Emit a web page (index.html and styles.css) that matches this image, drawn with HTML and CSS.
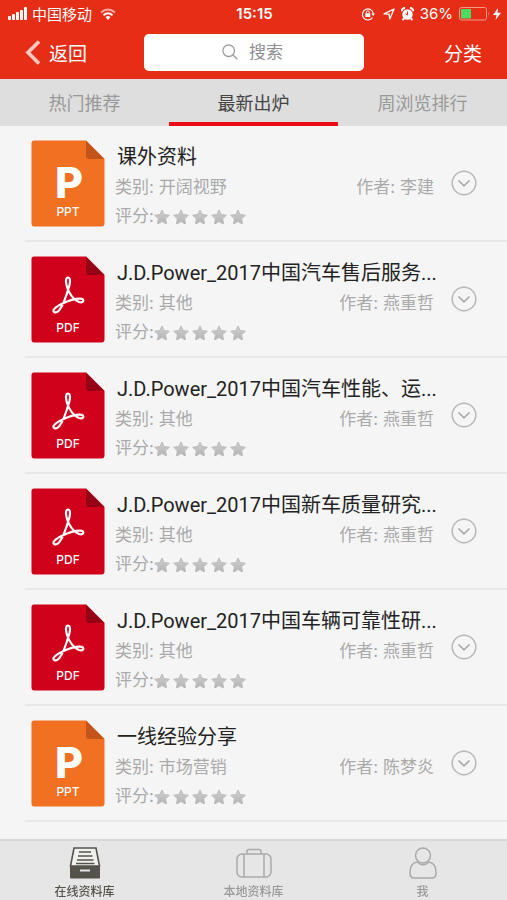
FILE: index.html
```html
<!DOCTYPE html>
<html lang="zh-CN">
<head>
    <meta charset="UTF-8">
    <meta name="viewport" content="width=device-width, initial-scale=1.0">
    <title>在线资料库</title>
    <link rel="stylesheet" href="styles.css">
</head>
<body>
    <!-- Shared icons -->
    <svg class="icon-defs" aria-hidden="true">
        <defs>
            <linearGradient id="star-fill" x1="0" y1="0" x2="0" y2="1">
                <stop offset="0" stop-color="#cfcfcf"/>
                <stop offset="1" stop-color="#b4b4b4"/>
            </linearGradient>
        </defs>
        <symbol id="ppt" viewBox="0 0 74 87">
            <path d="M3 0.500H55L73.500 19V83.500Q73.500 86.500 70.500 86.500H3Q0.500 86.500 0.500 83.500V3Q0.500 0.500 3 0.500Z" fill="#f27021"/>
            <path d="M55 0.500L73.500 19H58Q55 19 55 16Z" fill="#c4551a"/>
        </symbol>
        <symbol id="pdf" viewBox="0 0 74 87">
            <path d="M3 0.500H55L73.500 19V83.500Q73.500 86.500 70.500 86.500H3Q0.500 86.500 0.500 83.500V3Q0.500 0.500 3 0.500Z" fill="#d0021b"/>
            <path d="M55 0.500L73.500 19H58Q55 19 55 16Z" fill="#960014"/>
            <path d="M37 21.500C34.500 21.500 34.500 26 36 31C38 38 43 44 48 46C52 47 53 45 52 43.500C50 41.500 42 43 36 45.500C30 48 24 51 22.500 54C22 56.500 25 57.500 28 54.500C32 50 36 38 38.500 29C39.500 24 39 21.500 37 21.500Z" fill="none" stroke="#fff" stroke-width="2.200" stroke-linejoin="round"/>
        </symbol>
        <symbol id="star" viewBox="0 0 16 16">
            <path d="M8 1L10.200 5.500L15.300 6.200L11.700 9.800L12.500 15L8 12.600L3.500 15L4.300 9.800L0.700 6.200L5.800 5.500Z" fill="url(#star-fill)" stroke="#bdbdbd" stroke-width="1" stroke-linejoin="round"/>
        </symbol>
        <symbol id="expand" viewBox="0 0 26 26">
            <circle cx="13" cy="13" r="11.800" fill="none" stroke="#b8b8b8" stroke-width="1.500"/>
            <path d="M7.500 10.500L13 15.800L18.500 10.500" fill="none" stroke="#aaa" stroke-width="1.700"/>
        </symbol>
    </svg>

    <header class="header">
        <div class="status-bar">
            <div class="status-left">
                <svg width="20" height="13" viewBox="0 0 20 13" fill="#fff">
                    <rect x="0" y="9" width="3" height="4" rx="1"/>
                    <rect x="4" y="7" width="3" height="6" rx="1"/>
                    <rect x="8" y="5" width="3" height="8" rx="1"/>
                    <rect x="12" y="3" width="3" height="10" rx="1"/>
                    <rect x="16" y="0" width="3" height="13" rx="1"/>
                </svg>
                <span>中国移动</span>
                <svg class="wifi" width="16" height="12" viewBox="0 0 16 12" fill="none" stroke="#fff" stroke-width="2">
                    <path d="M1 4.500Q8 -1.500 15 4.500" opacity="0.600"/>
                    <path d="M3.500 7.200Q8 3.200 12.500 7.200"/>
                    <path d="M8 12L5.500 9Q8 7 10.500 9Z" fill="#fff" stroke="none"/>
                </svg>
            </div>
            <span class="time">15:15</span>
            <div class="status-right">
                <svg width="14" height="14" viewBox="0 0 14 14" fill="none" stroke="#fff">
                    <path d="M11.500 10.500A5.500 5.500 0 1 1 12.300 6.500" stroke-width="1.200"/>
                    <path d="M10.300 6.500H14L12.200 9Z" fill="#fff" stroke="none"/>
                    <rect x="4.300" y="6.300" width="5" height="3.700" fill="#fff" stroke="none"/>
                    <path d="M5.300 6.500V5.300Q5.300 4 6.800 4T8.300 5.300V6.500"/>
                </svg>
                <svg width="12" height="12" viewBox="0 0 12 12" fill="none" stroke="#fff" stroke-width="1.300" stroke-linejoin="round">
                    <path d="M1 5.800L11 1L6.800 11L6 6.200Z"/>
                </svg>
                <svg width="13" height="14" viewBox="0 0 13 14">
                    <circle cx="6.500" cy="7.500" r="5.200" fill="#fff"/>
                    <path d="M0.800 4.200A3 3 0 0 1 4 1M9 1A3 3 0 0 1 12.200 4.200M3 11.500L1.500 13M10 11.500L11.500 13" stroke="#fff" stroke-width="2" fill="none"/>
                    <path d="M6.500 4.500V8L4.500 6.800" stroke="#e62e17" fill="none"/>
                </svg>
                <span>36%</span>
                <svg width="32" height="14" viewBox="0 0 32 14">
                    <rect x="0.500" y="0.500" width="27" height="12.500" rx="2" fill="none" stroke="#f29a8c"/>
                    <rect x="2" y="2" width="10" height="9.500" fill="#4cd964"/>
                    <path d="M29.500 5Q31 6.500 29.500 9Z" fill="#f29a8c"/>
                </svg>
                <svg width="8" height="12" viewBox="0 0 8 12">
                    <path d="M5 0L0 7H3.500L2.500 12L8 4.700H4.500Z" fill="#fff"/>
                </svg>
            </div>
        </div>
        <div class="nav-bar">
            <button class="nav-button" type="button">
                <svg width="16" height="25" viewBox="0 0 16 25">
                    <path d="M14 1.500L3 12.500L14 23.500" fill="none" stroke="#ffc9c2" stroke-width="3.600"/>
                </svg>
                返回
            </button>
            <label class="search">
                <svg width="16" height="16" viewBox="0 0 16 16" fill="none" stroke="#999" stroke-width="1.300">
                    <circle cx="6.700" cy="6.700" r="5.800"/>
                    <path d="M11 11L15.300 15.300"/>
                </svg>
                <input type="text" placeholder="搜索" aria-label="搜索">
            </label>
            <button class="nav-button category" type="button">分类</button>
        </div>
    </header>

    <nav class="tabs">
        <a href="#hot">热门推荐</a>
        <a href="#latest" class="active">最新出炉</a>
        <a href="#weekly">周浏览排行</a>
    </nav>

    <main>
        <ul class="list">
            <li class="item">
                <svg class="file-icon" viewBox="0 0 74 87"><use href="#ppt"/><text x="24" y="58" class="file-letter">P</text><text x="37" y="76" class="file-type">PPT</text></svg>
                <div class="info">
                    <h3>课外资料</h3>
                    <p class="meta"><span>类别: 开阔视野</span><span>作者: 李建</span></p>
                    <p class="rating">评分:<svg><use href="#star"/></svg><svg><use href="#star"/></svg><svg><use href="#star"/></svg><svg><use href="#star"/></svg><svg><use href="#star"/></svg></p>
                </div>
                <button class="expand" type="button" aria-label="展开"><svg><use href="#expand"/></svg></button>
            </li>
            <li class="item">
                <svg class="file-icon" viewBox="0 0 74 87"><use href="#pdf"/><text x="37" y="76" class="file-type">PDF</text></svg>
                <div class="info">
                    <h3>J.D.Power_2017中国汽车售后服务...</h3>
                    <p class="meta"><span>类别: 其他</span><span>作者: 燕重哲</span></p>
                    <p class="rating">评分:<svg><use href="#star"/></svg><svg><use href="#star"/></svg><svg><use href="#star"/></svg><svg><use href="#star"/></svg><svg><use href="#star"/></svg></p>
                </div>
                <button class="expand" type="button" aria-label="展开"><svg><use href="#expand"/></svg></button>
            </li>
            <li class="item">
                <svg class="file-icon" viewBox="0 0 74 87"><use href="#pdf"/><text x="37" y="76" class="file-type">PDF</text></svg>
                <div class="info">
                    <h3>J.D.Power_2017中国汽车性能、运...</h3>
                    <p class="meta"><span>类别: 其他</span><span>作者: 燕重哲</span></p>
                    <p class="rating">评分:<svg><use href="#star"/></svg><svg><use href="#star"/></svg><svg><use href="#star"/></svg><svg><use href="#star"/></svg><svg><use href="#star"/></svg></p>
                </div>
                <button class="expand" type="button" aria-label="展开"><svg><use href="#expand"/></svg></button>
            </li>
            <li class="item">
                <svg class="file-icon" viewBox="0 0 74 87"><use href="#pdf"/><text x="37" y="76" class="file-type">PDF</text></svg>
                <div class="info">
                    <h3>J.D.Power_2017中国新车质量研究...</h3>
                    <p class="meta"><span>类别: 其他</span><span>作者: 燕重哲</span></p>
                    <p class="rating">评分:<svg><use href="#star"/></svg><svg><use href="#star"/></svg><svg><use href="#star"/></svg><svg><use href="#star"/></svg><svg><use href="#star"/></svg></p>
                </div>
                <button class="expand" type="button" aria-label="展开"><svg><use href="#expand"/></svg></button>
            </li>
            <li class="item">
                <svg class="file-icon" viewBox="0 0 74 87"><use href="#pdf"/><text x="37" y="76" class="file-type">PDF</text></svg>
                <div class="info">
                    <h3>J.D.Power_2017中国车辆可靠性研...</h3>
                    <p class="meta"><span>类别: 其他</span><span>作者: 燕重哲</span></p>
                    <p class="rating">评分:<svg><use href="#star"/></svg><svg><use href="#star"/></svg><svg><use href="#star"/></svg><svg><use href="#star"/></svg><svg><use href="#star"/></svg></p>
                </div>
                <button class="expand" type="button" aria-label="展开"><svg><use href="#expand"/></svg></button>
            </li>
            <li class="item">
                <svg class="file-icon" viewBox="0 0 74 87"><use href="#ppt"/><text x="24" y="58" class="file-letter">P</text><text x="37" y="76" class="file-type">PPT</text></svg>
                <div class="info">
                    <h3>一线经验分享</h3>
                    <p class="meta"><span>类别: 市场营销</span><span>作者: 陈梦炎</span></p>
                    <p class="rating">评分:<svg><use href="#star"/></svg><svg><use href="#star"/></svg><svg><use href="#star"/></svg><svg><use href="#star"/></svg><svg><use href="#star"/></svg></p>
                </div>
                <button class="expand" type="button" aria-label="展开"><svg><use href="#expand"/></svg></button>
            </li>
        </ul>
    </main>

    <nav class="bottom-bar">
        <a href="#online" class="active">
            <svg width="32" height="34" viewBox="0 0 32 34">
                <path d="M5 2H27L30.500 20H1.500Z" fill="#f0f0ee" stroke="#55534c" stroke-width="1.600"/>
                <path d="M10 6H22M9 10H23.500M8 14H24.500M7 17.500H25.500" stroke="#55534c" stroke-width="1.400"/>
                <rect x="1" y="20" width="30" height="12.500" rx="1" fill="#55534c"/>
                <path d="M11 24.500H21" stroke="#e6e6e6" stroke-width="2"/>
            </svg>
            在线资料库
        </a>
        <a href="#local">
            <svg width="36" height="34" viewBox="0 0 36 34" fill="none" stroke="#aaa" stroke-width="1.500">
                <rect x="1" y="8" width="34" height="23" rx="5"/>
                <path d="M8 8V31M28 8V31M11 8V5.500Q11 3.500 13 3.500H23Q25 3.500 25 5.500V8"/>
            </svg>
            本地资料库
        </a>
        <a href="#me">
            <svg width="28" height="34" viewBox="0 0 28 34" fill="none" stroke="#aaa" stroke-width="1.500">
                <circle cx="14" cy="9.500" r="7.500"/>
                <path d="M8 16Q1 17 1 27Q1 32 5 32H23Q27 32 27 27Q27 17 20 16Q14 21.500 8 16Z"/>
            </svg>
            我
        </a>
    </nav>
</body>
</html>
```
FILE: styles.css
```css
* {
    box-sizing: border-box;
}

body {
    font-family: Inter, "Noto Sans CJK SC", sans-serif;
    margin: 0;
    min-height: 100vh;
    display: flex;
    flex-direction: column;
    background-color: #f5f5f5;
}

a {
    text-decoration: none;
}

button {
    font-family: inherit;
    padding: 0;
    border: none;
    background: none;
    cursor: pointer;
}

svg {
    display: block;
    flex-shrink: 0;
}

.icon-defs {
    position: absolute;
    width: 0;
    height: 0;
}

.header {
    background-color: #e62e17;
    color: #fff;
}

.status-bar {
    display: grid;
    grid-template-columns: 1fr auto 1fr;
    align-items: center;
    height: 27px;
    padding: 0 6px 0 8px;
    font-size: 15px;
}

.status-left,
.status-right {
    display: flex;
    align-items: center;
    gap: 4px;
}

.status-right {
    justify-content: flex-end;
    gap: 6px;
}

.status-right svg:last-child {
    margin-left: -4px;
}

.status-right svg:first-child {
    margin-right: 2px;
}

.wifi {
    margin-left: 4px;
}

.time {
    font-weight: 600;
}

.nav-bar {
    display: grid;
    grid-template-columns: 1fr 220px 1fr;
    align-items: center;
    height: 52px;
    padding: 0 25px 2px;
}

.nav-button {
    display: flex;
    align-items: center;
    gap: 8px;
    color: #fff;
    font-size: 19px;
}

.category {
    justify-self: end;
}

.search {
    display: flex;
    align-items: center;
    justify-content: center;
    gap: 11px;
    height: 37px;
    background-color: #fff;
    border-radius: 5px;
}

.search input {
    width: 36px;
    padding: 0;
    border: none;
    outline: none;
    font-family: inherit;
    font-size: 17px;
}

.search input::placeholder {
    color: #8e8e93;
}

.tabs {
    display: flex;
    height: 47px;
    background-color: #dedede;
}

.tabs a {
    flex: 1;
    display: flex;
    align-items: center;
    justify-content: center;
    border-top: 2px solid transparent;
    border-bottom: 4px solid transparent;
    color: #999;
    font-size: 18px;
}

.tabs .active {
    border-bottom-color: #ea0d14;
    color: #444;
}

main {
    flex: 1;
}

.list {
    list-style: none;
    margin: 0;
    padding: 0 0 0 25px;
}

.item {
    display: flex;
    align-items: center;
    height: 116px;
    padding: 0 30px 0 6px;
    border-bottom: 2px solid #e8e8e8;
}

.file-icon {
    width: 74px;
    height: 87px;
}

.file-letter {
    fill: #fff;
    font-size: 43px;
    font-weight: 800;
}

.file-type {
    fill: #fff;
    font-size: 12px;
    font-weight: 500;
    text-anchor: middle;
}

.info {
    flex: 1;
    min-width: 0;
    padding: 6px 17px 0 10px;
}

.info h3 {
    margin: 0;
    padding-left: 2px;
    color: #222;
    font-family: Roboto, "Noto Sans CJK SC", sans-serif;
    font-size: 20px;
    font-weight: 400;
    line-height: 32px;
    white-space: nowrap;
}

.info p {
    display: flex;
    align-items: center;
    margin: 0;
    color: #aaa;
    font-size: 17px;
    line-height: 29px;
}

.info .meta {
    justify-content: space-between;
}

.rating svg {
    width: 16px;
    height: 16px;
    margin-right: 3px;
}

.expand svg {
    width: 26px;
    height: 26px;
}

.bottom-bar {
    position: sticky;
    bottom: 0;
    display: flex;
    height: 61px;
    background-color: #e6e6e6;
    border-top: 2px solid #d8d8d8;
}

.bottom-bar a {
    flex: 1;
    display: flex;
    flex-direction: column;
    align-items: center;
    padding-top: 5px;
    color: #999;
    font-size: 12px;
    font-weight: 500;
    line-height: 24px;
}

.bottom-bar .active {
    color: #55534c;
}
```
